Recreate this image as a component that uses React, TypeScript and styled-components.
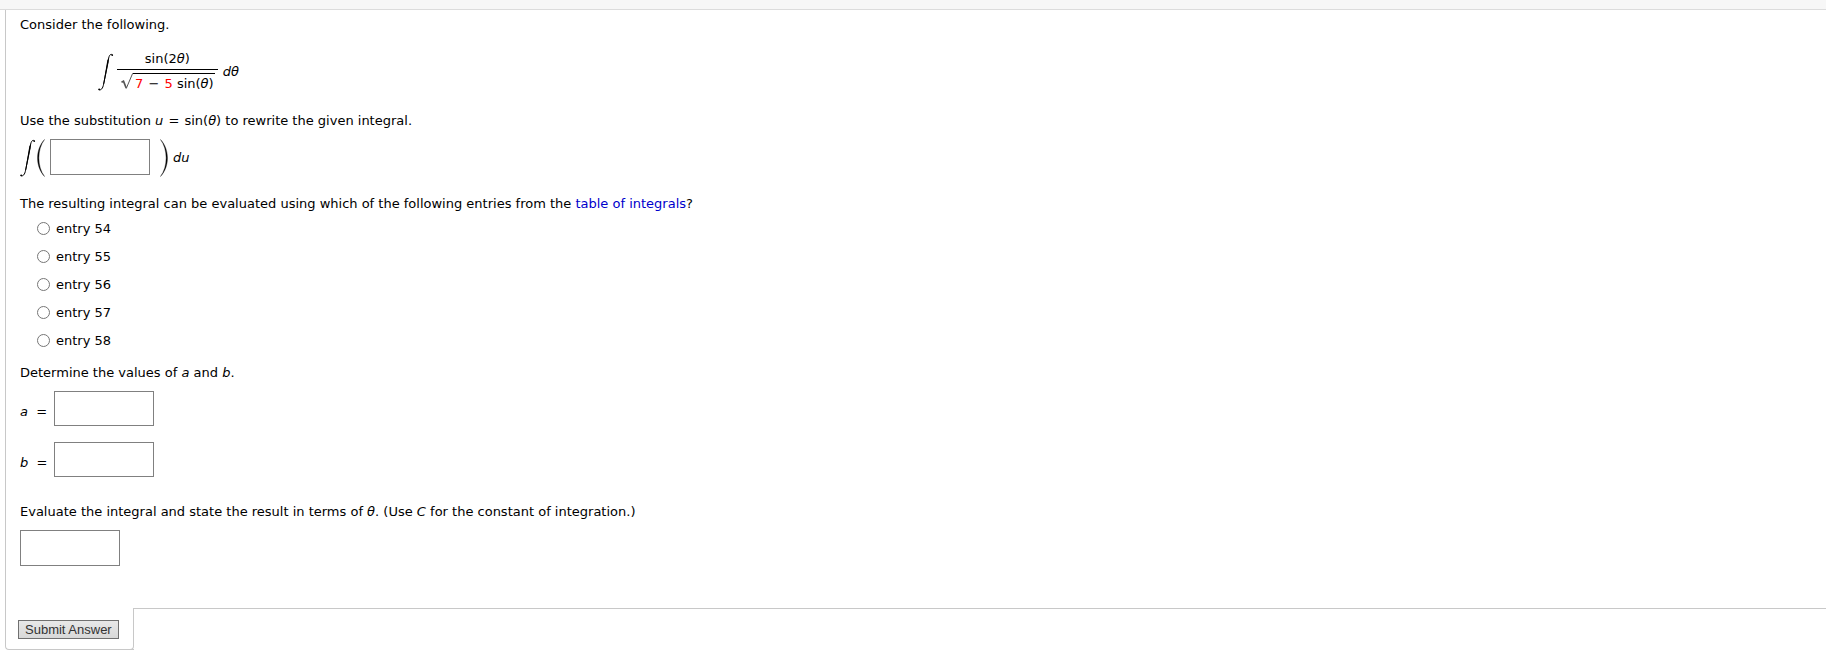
import React from "react";
import styled, { createGlobalStyle } from "styled-components";

const GlobalStyle = createGlobalStyle`
  *, *::before, *::after { box-sizing: border-box; }
  body {
    margin: 0;
    background: #fff;
    color: #000;
    font-family: Verdana, "DejaVu Sans", sans-serif;
    font-size: 13px;
    line-height: 18px;
  }
`;

const TopBar = styled.header`
  height: 10px;
  background: #f7f7f7;
  border-bottom: 1px solid #dcdcdc;
`;

const Page = styled.main`
  padding-left: 5px;
`;

const Question = styled.form`
  display: flex;
  flex-direction: column;
`;

const Body = styled.div`
  display: flex;
  flex-direction: column;
  padding: 6px 14px 42px;
  border-left: 1px solid #c8c8c8;
`;

const Text = styled.p<{ $above?: number }>`
  margin: ${(p) => p.$above ?? 0}px 0 0;
`;

const Formula = styled.div`
  display: flex;
  align-items: center;
  margin: 16px 0 0 78px;
`;

const Fraction = styled.span`
  display: flex;
  flex-direction: column;
  margin: 0 5px 0 3px;
`;

const Numerator = styled.span`
  padding-bottom: 1px;
  border-bottom: 1px solid #000;
  text-align: center;
`;

const Denominator = styled.span`
  display: flex;
  padding: 3px 3px 0 4px;
`;

const Radicand = styled.span`
  padding: 1px 1px 0 2px;
  border-top: 1px solid #000;
  white-space: nowrap;
`;

const Operator = styled.span`
  margin: 0 1px;
`;

const Value = styled.span`
  color: #f00;
`;

const AnswerRow = styled.div<{ $above: number }>`
  display: flex;
  align-items: flex-start;
  margin-top: ${(p) => p.$above}px;
`;

const IntegrandRow = styled(AnswerRow)`
  align-items: center;
`;

const AnswerInput = styled.input<{ $short?: boolean }>`
  width: 100px;
  height: ${(p) => (p.$short ? 35 : 36)}px;
  padding: 0 6px;
  border: 1px solid #808080;
  border-radius: 0;
  background: #fff;
  font: inherit;
`;

const IntegrandInput = styled(AnswerInput)`
  align-self: flex-start;
  margin: 0 10px 0 5px;
`;

const Differential = styled.i`
  margin-left: 4px;
`;

const VariableLabel = styled.label`
  width: 34px;
  padding-top: 12px;
  white-space: pre;
`;

const Choices = styled.fieldset`
  display: flex;
  flex-direction: column;
  align-items: flex-start;
  margin: 1px 0 0 17px;
  padding: 0;
  border: 0;
`;

const Choice = styled.label`
  display: flex;
  align-items: center;
  gap: 6px;
  height: 28px;
`;

const ChoiceText = styled.span`
  padding-top: 2px;
`;

const Radio = styled.input`
  width: 13px;
  height: 13px;
  margin: 0;
`;

const Link = styled.a`
  color: #0000cc;
  text-decoration: none;
`;

const Footer = styled.div`
  display: flex;
  align-items: flex-start;
`;

const SubmitTab = styled.div`
  padding: 12px 15px 10px 12px;
  border: solid #c8c8c8;
  border-width: 0 0 1px 1px;
  border-radius: 0 0 0 4px;
`;

const FooterRule = styled.div`
  flex: 1;
  align-self: stretch;
  border-top: 1px solid #c8c8c8;
`;

const TabEdge = styled.div`
  align-self: stretch;
  width: 4px;
  margin-left: -4px;
  border: solid #c8c8c8;
  border-width: 0 1px 1px 0;
  border-radius: 0 0 4px 0;
`;

const SubmitButton = styled.button`
  height: 19px;
  padding: 0 6px;
  border: 1px solid #707070;
  border-radius: 0;
  background: linear-gradient(#e8e8e8, #d8d8d8);
  color: #333;
  font: 13px/17px Arial, "Liberation Sans", sans-serif;
`;

const IntegralSign = () => (
  <svg width="16" height="38" viewBox="0 0 16 38" aria-hidden="true">
    <path
      d="M14.6 2.2C13.4.7 11.6 1 10.7 5L5.6 31.2C4.8 35.5 3 37.7.6 36.6"
      fill="none"
      stroke="#000"
      strokeWidth="1"
    />
    <path d="M10.8 5.5 9.4 7 5.2 31.6 6.2 30.8 10.6 9Z" fill="#000" />
    <circle cx="14.2" cy="2.1" r="0.9" />
    <circle cx="1.2" cy="36.3" r="0.9" />
  </svg>
);

const Paren = ({ flip = false }: { flip?: boolean }) => (
  <svg width="9" height="38" viewBox="0 0 9 38" aria-hidden="true">
    <path
      d={
        flip
          ? "M.5.5C9.8 10.5 9.8 27.5.5 37.5C8 27.5 8 10.5.5.5Z"
          : "M8.5.5C-.8 10.5-.8 27.5 8.5 37.5C1 27.5 1 10.5 8.5.5Z"
      }
      stroke="#222"
      strokeWidth="0.4"
    />
  </svg>
);

const RadicalSign = () => (
  <svg width="12" height="19" viewBox="0 0 12 19" aria-hidden="true">
    <path d="M.5 9.2 2.5 8.2 5.2 15" fill="none" stroke="#555" strokeWidth="1.7" />
    <path d="M5.2 15.6 11.6.5H12" fill="none" stroke="#555" strokeWidth="1" />
  </svg>
);

const entries = [54, 55, 56, 57, 58];
const constants = ["a", "b"];

export default function App() {
  return (
    <>
      <GlobalStyle />
      <TopBar />
      <Page>
        <Question onSubmit={(e) => e.preventDefault()}>
          <Body>
            <Text>Consider the following.</Text>
            <Formula>
              <IntegralSign />
              <Fraction>
                <Numerator>
                  sin(2<i>θ</i>)
                </Numerator>
                <Denominator>
                  <RadicalSign />
                  <Radicand>
                    <Value>7</Value> <Operator>−</Operator> <Value>5</Value> sin(<i>θ</i>)
                  </Radicand>
                </Denominator>
              </Fraction>
              <i>dθ</i>
            </Formula>
            <Text $above={19}>
              Use the substitution <i>u</i> <Operator>=</Operator> sin(<i>θ</i>) to rewrite the given
              integral.
            </Text>
            <IntegrandRow $above={9}>
              <IntegralSign />
              <Paren />
              <IntegrandInput aria-label="Integrand in terms of u" />
              <Paren flip />
              <Differential>du</Differential>
            </IntegrandRow>
            <Text $above={18}>
              The resulting integral can be evaluated using which of the following entries from the{" "}
              <Link href="#table">table of integrals</Link>?
            </Text>
            <Choices aria-label="Table entry">
              {entries.map((n) => (
                <Choice key={n}>
                  <Radio type="radio" name="entry" value={n} />
                  <ChoiceText>entry {n}</ChoiceText>
                </Choice>
              ))}
            </Choices>
            <Text $above={10}>
              Determine the values of <i>a</i> and <i>b</i>.
            </Text>
            {constants.map((name, i) => (
              <AnswerRow key={name} $above={i ? 16 : 9}>
                <VariableLabel htmlFor={name}>
                  <i>{name}</i>
                  {"  ="}
                </VariableLabel>
                <AnswerInput id={name} $short />
              </AnswerRow>
            ))}
            <Text $above={26}>
              Evaluate the integral and state the result in terms of <i>θ</i>. (Use <i>C</i> for the
              constant of integration.)
            </Text>
            <AnswerRow $above={9}>
              <AnswerInput aria-label="Result in terms of θ" />
            </AnswerRow>
          </Body>
          <Footer>
            <SubmitTab>
              <SubmitButton type="submit">Submit Answer</SubmitButton>
            </SubmitTab>
            <TabEdge />
            <FooterRule />
          </Footer>
        </Question>
      </Page>
    </>
  );
}
